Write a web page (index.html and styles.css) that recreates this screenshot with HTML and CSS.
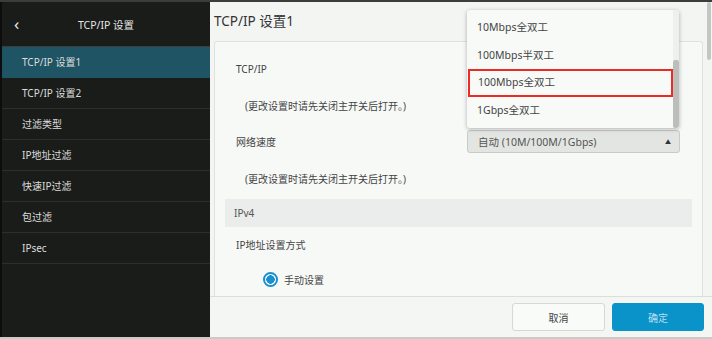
FILE: index.html
```html
<!DOCTYPE html>
<html>
<head>
  <meta charset="utf-8">
  <title>TCP/IP 设置</title>
  <link rel="stylesheet" href="styles.css">
</head>
<body>
  <div class="screen">
    <aside class="side">
      <div class="side-head">
        <span class="back">&lsaquo;</span>
        <span class="side-title">TCP/IP 设置</span>
      </div>
      <ul class="menu">
        <li class="active">TCP/IP 设置1</li>
        <li>TCP/IP 设置2</li>
        <li>过滤类型</li>
        <li>IP地址过滤</li>
        <li>快速IP过滤</li>
        <li>包过滤</li>
        <li>IPsec</li>
      </ul>
    </aside>

    <main class="main">
      <h1 class="page-title">TCP/IP 设置1</h1>

      <div class="card">
        <div class="row row-tcp">
          <span class="label">TCP/IP</span>
          <span class="toggle"></span>
        </div>
        <div class="note note-1">(更改设置时请先关闭主开关后打开。)</div>
        <div class="row row-speed">
          <span class="label">网络速度</span>
          <div class="select">
            <span>自动 (10M/100M/1Gbps)</span>
            <span class="arrow">&#9650;</span>
          </div>
        </div>
        <div class="note note-2">(更改设置时请先关闭主开关后打开。)</div>
        <div class="section">IPv4</div>
        <div class="row row-ip">
          <span class="label">IP地址设置方式</span>
        </div>
        <div class="radio-row">
          <span class="radio"></span>
          <span>手动设置</span>
        </div>
      </div>

      <div class="footer">
        <button class="btn btn-cancel">取消</button>
        <button class="btn btn-ok">确定</button>
      </div>

      <div class="scroll-thumb"></div>

      <!-- 网络速度下拉列表 -->
      <div class="dropdown">
        <ul class="options">
          <li>10Mbps全双工</li>
          <li>100Mbps半双工</li>
          <li class="selected">100Mbps全双工</li>
          <li>1Gbps全双工</li>
        </ul>
        <div class="dd-scroll"><div class="dd-thumb"></div></div>
      </div>
    </main>
  </div>
</body>
</html>
```

FILE: styles.css
```css
* {
  box-sizing: border-box;
}

html, body {
  margin: 0;
  padding: 0;
}

body {
  width: 712px;
  height: 339px;
  overflow: hidden;
  font-family: "Noto Sans", "Noto Sans CJK SC", sans-serif;
  font-size: 10px;
  color: #444;
  background: #f4f6f4;
}

.screen {
  display: flex;
  width: 712px;
  height: 339px;
  border-top: 2px solid #3b3d3c;
  border-bottom: 2px solid #c9cbc9;
}

/* 左侧菜单 */
.side {
  width: 210px;
  flex-shrink: 0;
  background: #1a1c1a;
  border-left: 2px solid #0c0d0c;
  color: #dcdcdc;
}

.side-head {
  height: 45px;
  display: flex;
  align-items: center;
  position: relative;
  border-bottom: 1px solid #3a3d3b;
}

.back {
  position: absolute;
  left: 12px;
  top: 10px;
  font-size: 17px;
  color: #e6e6e6;
}

.side-title {
  flex: 1;
  text-align: center;
  font-size: 10.5px;
  color: #e6e6e6;
}

.menu {
  list-style: none;
  margin: 0;
  padding: 0;
}

.menu li {
  height: 31px;
  line-height: 30px;
  padding-left: 20px;
  border-bottom: 1px solid #2c2f2d;
}

.menu li.active {
  background: #1e5463;
  border-bottom-color: #1e5463;
}

/* 右侧内容 */
.main {
  flex: 1;
  position: relative;
  display: flex;
  flex-direction: column;
  padding-left: 4px;
  background: #f3f5f3;
}

.page-title {
  margin: 0;
  height: 39px;
  line-height: 38px;
  font-size: 13.5px;
  font-weight: normal;
  color: #333;
}

.card {
  flex: 1;
  overflow: hidden;
  width: 489px;
  background: #f7f9f7;
  border: 1px solid #dfe1df;
  border-bottom: none;
  border-radius: 3px 3px 0 0;
  padding: 5px 10px 0;
}

.row {
  display: flex;
  align-items: center;
  justify-content: space-between;
  padding: 0 12px 0 11px;
}

.row-tcp {
  height: 44px;
}

.row-speed {
  height: 40px;
}

.row-ip {
  height: 34px;
}

.note {
  padding-left: 20px;
}

.note-1 {
  height: 30px;
  line-height: 30px;
}

.note-2 {
  height: 36px;
  line-height: 36px;
}

.toggle {
  width: 36px;
  height: 16px;
  border-radius: 8px;
  background: #1d8fc8;
  margin-right: 11px;
}

.select {
  width: 213px;
  height: 23px;
  display: flex;
  align-items: center;
  justify-content: space-between;
  padding: 0 8px 0 10px;
  background: #e3e5e3;
  border: 1px solid #c9cbc9;
  border-radius: 3px;
  color: #555;
  font-size: 10.5px;
}

.arrow {
  font-size: 6px;
  color: #333;
}

.section {
  margin-top: 2px;
  height: 28px;
  line-height: 28px;
  padding-left: 9px;
  background: #ebecec;
  color: #555;
}

.radio-row {
  height: 36px;
  display: flex;
  align-items: center;
  gap: 6px;
  padding-left: 38px;
}

.radio {
  width: 15px;
  height: 15px;
  border-radius: 50%;
  border: 2px solid #1a8fcf;
  background: radial-gradient(circle, #1a8fcf 0 4px, #fff 4.5px);
}

.footer {
  height: 41px;
  flex-shrink: 0;
  display: flex;
  align-items: center;
  justify-content: flex-end;
  gap: 7px;
  margin-left: -4px;
  padding-right: 8px;
  border-top: 1px solid #dcdedc;
  background: #f4f6f4;
}

.btn {
  height: 28px;
  font-family: inherit;
  font-size: 10px;
  border-radius: 3px;
}

.btn-cancel {
  width: 93px;
  background: #f9fbf9;
  border: 1px solid #d6d8d6;
  color: #444;
}

.btn-ok {
  width: 92px;
  background: #0a93c9;
  border: 1px solid #0a93c9;
  color: #b9dff0;
}

.scroll-thumb {
  position: absolute;
  right: 1px;
  top: 0;
  width: 4px;
  height: 58px;
  border-radius: 2px;
  background: #c4c6c4;
}

/* 下拉列表 */
.dropdown {
  position: absolute;
  left: 257px;
  top: 8px;
  width: 212px;
  height: 118px;
  display: flex;
  background: #f8faf8;
  border-radius: 3px;
  box-shadow: 0 1px 4px rgba(0, 0, 0, 0.3);
  overflow: hidden;
  font-size: 10.5px;
}

.options {
  list-style: none;
  margin: 0;
  padding: 4px 0 0;
  flex: 1;
}

.options li {
  height: 27.5px;
  line-height: 27px;
  padding-left: 10px;
  color: #444;
}

.options li.selected {
  border: 2px solid #ee2a24;
  line-height: 23px;
  padding-left: 8px;
  margin-left: 1px;
}

.dd-scroll {
  width: 6px;
  display: flex;
  flex-direction: column;
  justify-content: flex-end;
  background: #eeefee;
}

.dd-thumb {
  height: 68px;
  background: #bcbebc;
  border-radius: 2px;
}
```
